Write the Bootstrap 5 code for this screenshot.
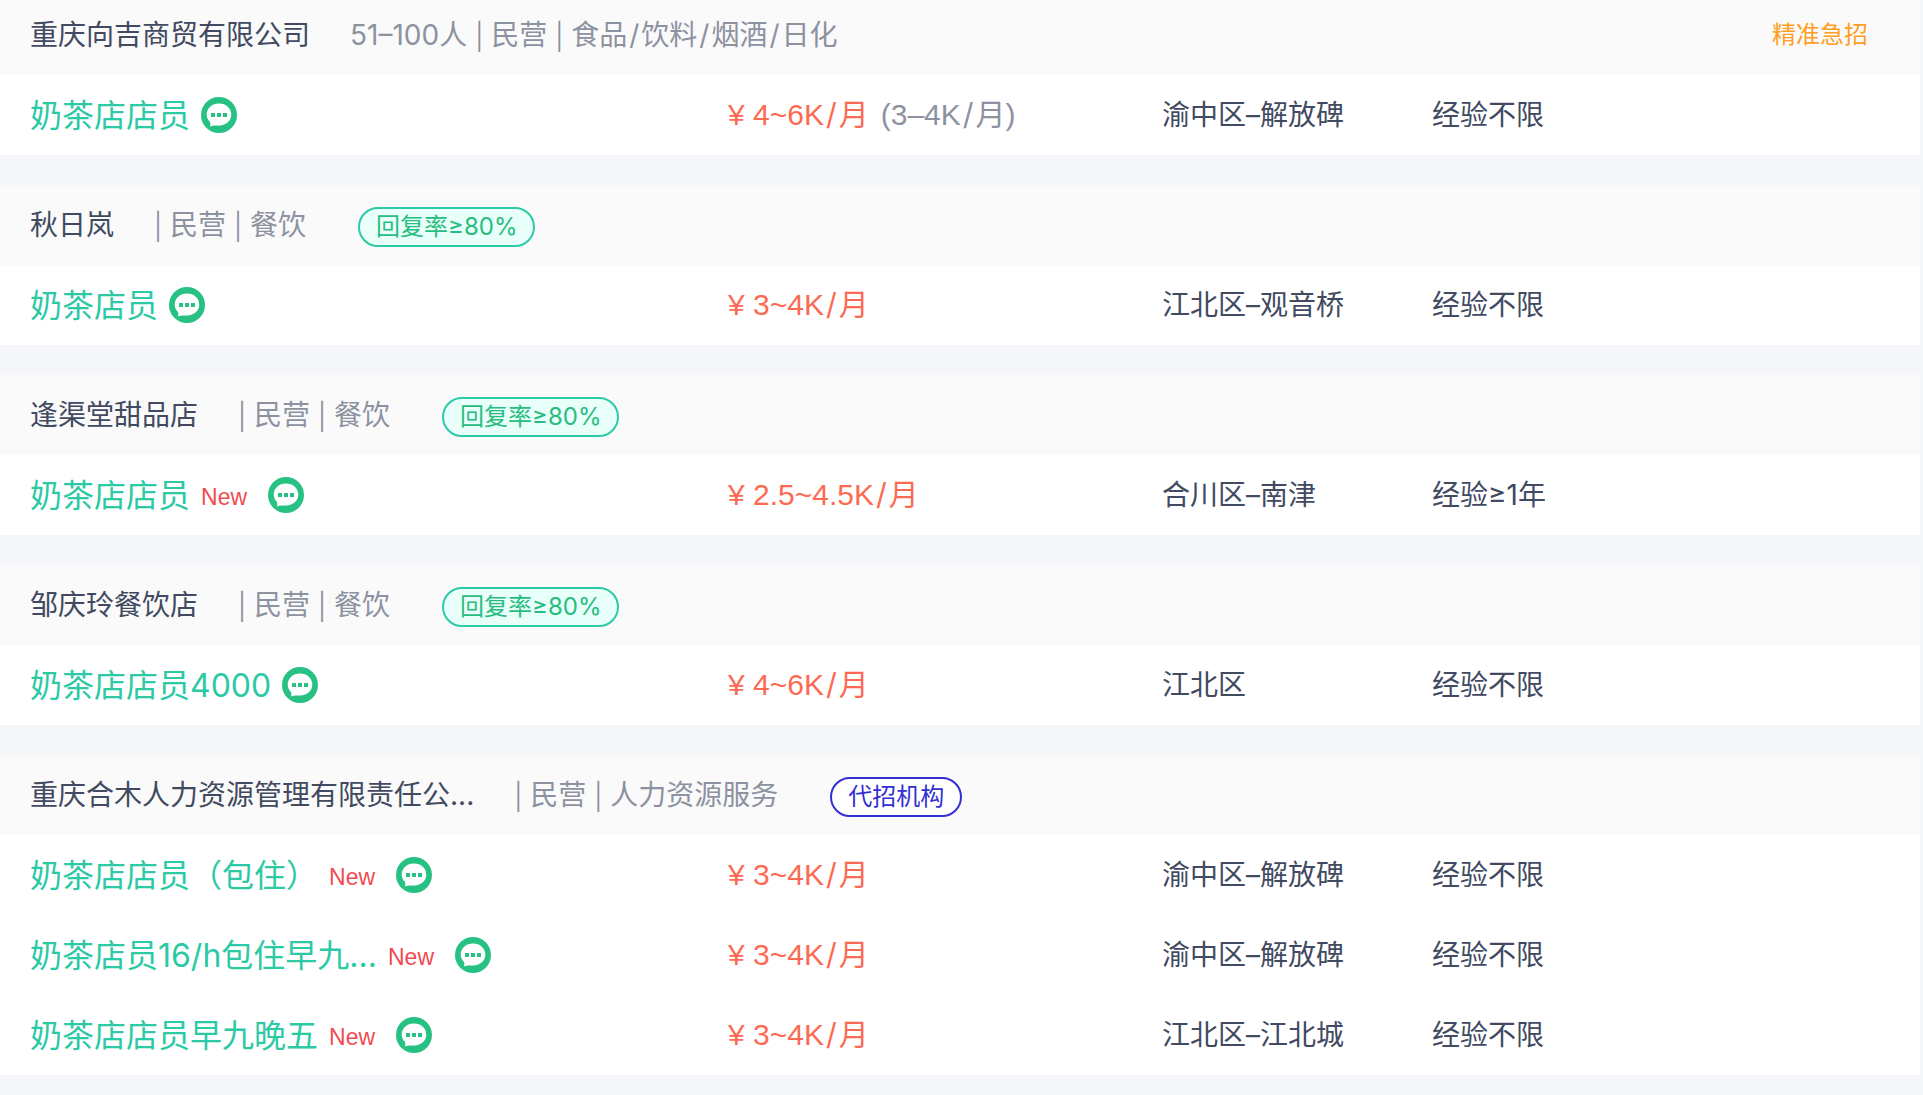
<!DOCTYPE html>
<html lang="zh-CN">
<head>
<meta charset="utf-8">
<meta name="viewport" content="width=device-width, initial-scale=1">
<title>职位列表</title>
<link href="https://cdn.jsdelivr.net/npm/bootstrap@5.3.0/dist/css/bootstrap.min.css" rel="stylesheet">
<style>
  body { background: #f5f6f9; color: #414a60; font-family: Inter, "Noto Sans CJK SC", sans-serif; font-size: 28px; line-height: 40px; }
  .job-list { gap: 30px; margin: -5px 3px 20px 0; }
  .firm-head { background: #fafafa; min-height: 80px; padding: 0 52px 0 30px; }
  .firm-name { color: #414a60; margin-right: 40px; }
  .firm-meta { color: #8d92a1; gap: 8px; }
  .bar { width: 8px; line-height: 34px; text-align: center; font-family: "Noto Sans CJK SC", sans-serif; }
  .slash { margin: 0 2px; }
  .firm-tag { font-size: 24px; line-height: 36px; border: 2px solid #2dcaa7; border-radius: 20px; background: #e8fffa; color: #28bd80; padding: 0 16px; margin: 4px 0 0 52px; }
  .firm-tag.agency { border-color: #322fd3; color: #322fd3; background: #fff; }
  .urgent { font-size: 24px; color: #ff9f24; }
  .job-line { display: grid; grid-template-columns: 698fr 434fr 270fr 458fr; min-height: 80px; padding: 0 30px; }
  .job-link { font-size: 32px; color: #2cc9a5; padding-top: 2px; }
  .job-title { gap: 11px; }
  .new-flag { font: 23px/32px "Liberation Sans", sans-serif; color: #f04b4f; width: 56px; padding-top: 4px; }
  .pay { color: #fd6a52; font-family: "Liberation Sans", "Noto Sans CJK SC", sans-serif; font-size: 30px; padding-bottom: 2px; }
  .pay-old { color: #8d92a1; margin-left: 12px; }
  .per { font-family: Inter, "Noto Sans CJK SC", sans-serif; }
  .chat-btn { width: 36px; height: 36px; line-height: 0; }
</style>
</head>
<body>
<svg class="d-none" aria-hidden="true">
  <symbol id="chat" viewBox="0 0 36 36">
    <circle cx="18" cy="18" r="18" fill="#28c184"/>
    <path fill="#fff" d="M18 6.500C25 6.500 30.300 11.200 30.300 17.600C30.300 24 25 28.300 18.500 28.500C15 28.700 12 28.300 8.800 29.500C9.700 27.800 9.600 26.300 8.800 24.800C6.900 23 5.700 20.600 5.700 17.600C5.700 11.200 11 6.500 18 6.500Z"/>
    <path fill="#28c184" d="M10 16h4v4h-4zM16 16h4v4h-4zM22 16h4v4h-4z"/>
  </symbol>
</svg>
<main class="job-list d-flex flex-column">
  <section>
    <header class="firm-head d-flex align-items-center">
      <a class="firm-name text-decoration-none" href="#">重庆向吉商贸有限公司</a>
      <div class="firm-meta d-flex"><span>51–100人</span><span class="bar">|</span><span>民营</span><span class="bar">|</span><span>食品<span class="slash">/</span>饮料<span class="slash">/</span>烟酒<span class="slash">/</span>日化</span></div>
      <span class="urgent ms-auto">精准急招</span>
    </header>
    <div class="job-line bg-white align-items-center">
      <div class="job-title d-flex align-items-center"><a class="job-link text-decoration-none" href="#">奶茶店店员</a><button class="chat-btn btn p-0 border-0" aria-label="聊一聊"><svg width="36" height="36"><use href="#chat"/></svg></button></div>
      <div class="pay">¥ 4~6K<span class="per"><span class="slash">/</span>月</span><span class="pay-old">(3–4K<span class="per"><span class="slash">/</span>月</span>)</span></div>
      <div>渝中区–解放碑</div>
      <div>经验不限</div>
    </div>
  </section>
  <section>
    <header class="firm-head d-flex align-items-center">
      <a class="firm-name text-decoration-none" href="#">秋日岚</a>
      <div class="firm-meta d-flex"><span class="bar">|</span><span>民营</span><span class="bar">|</span><span>餐饮</span></div>
      <span class="firm-tag">回复率≥80%</span>
    </header>
    <div class="job-line bg-white align-items-center">
      <div class="job-title d-flex align-items-center"><a class="job-link text-decoration-none" href="#">奶茶店员</a><button class="chat-btn btn p-0 border-0" aria-label="聊一聊"><svg width="36" height="36"><use href="#chat"/></svg></button></div>
      <div class="pay">¥ 3~4K<span class="per"><span class="slash">/</span>月</span></div>
      <div>江北区–观音桥</div>
      <div>经验不限</div>
    </div>
  </section>
  <section>
    <header class="firm-head d-flex align-items-center">
      <a class="firm-name text-decoration-none" href="#">逢渠堂甜品店</a>
      <div class="firm-meta d-flex"><span class="bar">|</span><span>民营</span><span class="bar">|</span><span>餐饮</span></div>
      <span class="firm-tag">回复率≥80%</span>
    </header>
    <div class="job-line bg-white align-items-center">
      <div class="job-title d-flex align-items-center"><a class="job-link text-decoration-none" href="#">奶茶店店员</a><span class="new-flag">New</span><button class="chat-btn btn p-0 border-0" aria-label="聊一聊"><svg width="36" height="36"><use href="#chat"/></svg></button></div>
      <div class="pay">¥ 2.5~4.5K<span class="per"><span class="slash">/</span>月</span></div>
      <div>合川区–南津</div>
      <div>经验≥1年</div>
    </div>
  </section>
  <section>
    <header class="firm-head d-flex align-items-center">
      <a class="firm-name text-decoration-none" href="#">邹庆玲餐饮店</a>
      <div class="firm-meta d-flex"><span class="bar">|</span><span>民营</span><span class="bar">|</span><span>餐饮</span></div>
      <span class="firm-tag">回复率≥80%</span>
    </header>
    <div class="job-line bg-white align-items-center">
      <div class="job-title d-flex align-items-center"><a class="job-link text-decoration-none" href="#">奶茶店店员4000</a><button class="chat-btn btn p-0 border-0" aria-label="聊一聊"><svg width="36" height="36"><use href="#chat"/></svg></button></div>
      <div class="pay">¥ 4~6K<span class="per"><span class="slash">/</span>月</span></div>
      <div>江北区</div>
      <div>经验不限</div>
    </div>
  </section>
  <section>
    <header class="firm-head d-flex align-items-center">
      <a class="firm-name text-decoration-none" href="#">重庆合木人力资源管理有限责任公...</a>
      <div class="firm-meta d-flex"><span class="bar">|</span><span>民营</span><span class="bar">|</span><span>人力资源服务</span></div>
      <span class="firm-tag agency">代招机构</span>
    </header>
    <div class="job-line bg-white align-items-center">
      <div class="job-title d-flex align-items-center"><a class="job-link text-decoration-none" href="#">奶茶店店员（包住）</a><span class="new-flag">New</span><button class="chat-btn btn p-0 border-0" aria-label="聊一聊"><svg width="36" height="36"><use href="#chat"/></svg></button></div>
      <div class="pay">¥ 3~4K<span class="per"><span class="slash">/</span>月</span></div>
      <div>渝中区–解放碑</div>
      <div>经验不限</div>
    </div>
    <div class="job-line bg-white align-items-center">
      <div class="job-title d-flex align-items-center"><a class="job-link text-decoration-none" href="#">奶茶店员16/h包住早九...</a><span class="new-flag">New</span><button class="chat-btn btn p-0 border-0" aria-label="聊一聊"><svg width="36" height="36"><use href="#chat"/></svg></button></div>
      <div class="pay">¥ 3~4K<span class="per"><span class="slash">/</span>月</span></div>
      <div>渝中区–解放碑</div>
      <div>经验不限</div>
    </div>
    <div class="job-line bg-white align-items-center">
      <div class="job-title d-flex align-items-center"><a class="job-link text-decoration-none" href="#">奶茶店店员早九晚五</a><span class="new-flag">New</span><button class="chat-btn btn p-0 border-0" aria-label="聊一聊"><svg width="36" height="36"><use href="#chat"/></svg></button></div>
      <div class="pay">¥ 3~4K<span class="per"><span class="slash">/</span>月</span></div>
      <div>江北区–江北城</div>
      <div>经验不限</div>
    </div>
  </section>
</main>
<script src="https://cdn.jsdelivr.net/npm/bootstrap@5.3.0/dist/js/bootstrap.bundle.min.js"></script>
</body>
</html>
